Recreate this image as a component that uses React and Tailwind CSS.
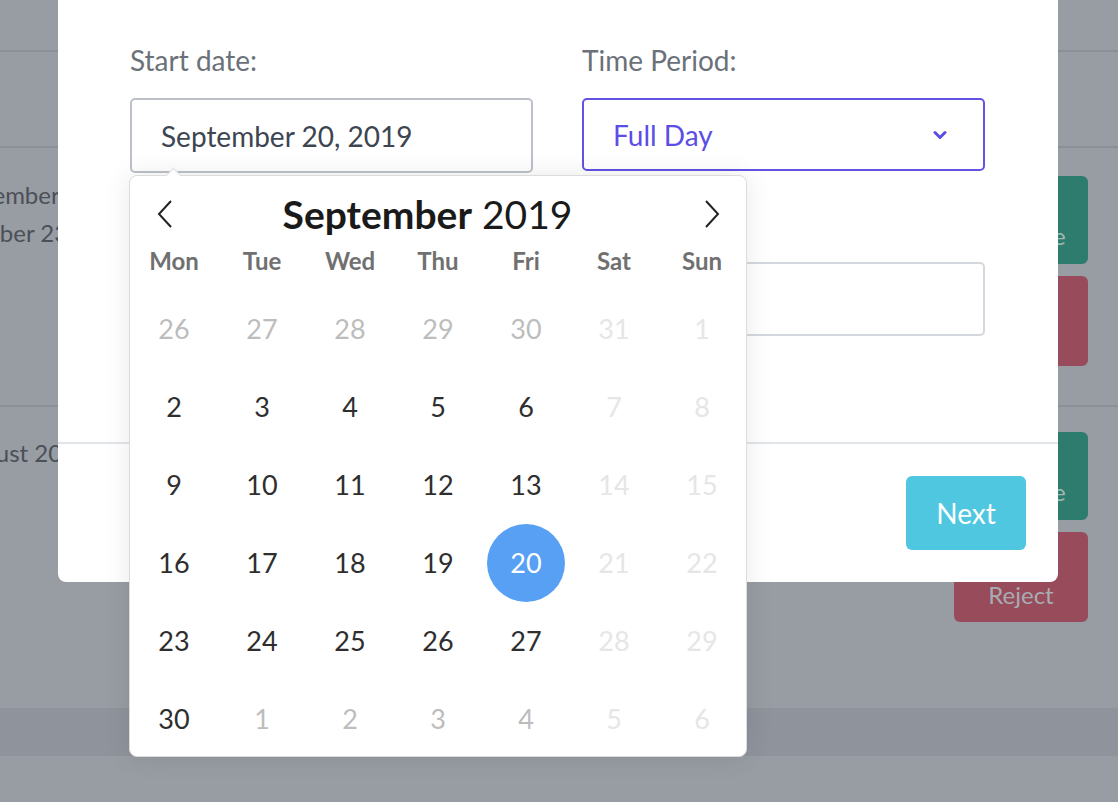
import React from "react";

const weeks = [
  [["26","o"],["27","o"],["28","o"],["29","o"],["30","o"],["31","w"],["1","w"]],
  [["2","c"],["3","c"],["4","c"],["5","c"],["6","c"],["7","w"],["8","w"]],
  [["9","c"],["10","c"],["11","c"],["12","c"],["13","c"],["14","w"],["15","w"]],
  [["16","c"],["17","c"],["18","c"],["19","c"],["20","s"],["21","w"],["22","w"]],
  [["23","c"],["24","c"],["25","c"],["26","c"],["27","c"],["28","w"],["29","w"]],
  [["30","c"],["1","o"],["2","o"],["3","o"],["4","o"],["5","w"],["6","w"]],
];

const dayNames = ["Mon", "Tue", "Wed", "Thu", "Fri", "Sat", "Sun"];

function DayCell({ label, kind }) {
  if (kind === "s") {
    return (
      <div className="flex items-center justify-center h-[78px]">
        <div className="w-[78px] h-[78px] rounded-full bg-[#58a0f4] flex items-center justify-center text-white text-[27px]">
          {label}
        </div>
      </div>
    );
  }
  const color =
    kind === "c" ? "text-[#2e2e2e]" : kind === "o" ? "text-[#bdbdbd]" : "text-[#e6e6e6]";
  return (
    <div className={`flex items-center justify-center h-[78px] text-[27px] ${color}`}>{label}</div>
  );
}

export default function App() {
  return (
    <div className="relative w-[1118px] h-[802px] overflow-hidden bg-[#989ca3] font-['Lato',sans-serif]">
      {/* background page */}
      <div className="flex flex-col">
        <div className="h-[50px]" />
        <div className="h-[2px] bg-[#8b8f96]" />
        <div className="h-[94px]" />
        <div className="h-[2px] bg-[#8b8f96]" />
        <div className="h-[257px] flex justify-between">
          <div className="flex flex-col pt-[28px] text-[24px] leading-[38px] text-[#4b5058] whitespace-nowrap">
            <div className="-ml-[55px]">September 20, 2019</div>
            <div className="-ml-[80px]">September 23, 2019</div>
          </div>
          <div className="flex flex-col gap-[12px] pt-[28px] pr-[30px]">
            <div className="w-[134px] h-[88px] rounded-md bg-[#2e7c6d] flex items-end justify-center pb-[10px] text-[24px] text-[#a3b8b2]">
              Approve
            </div>
            <div className="w-[134px] h-[90px] rounded-md bg-[#974b5b] flex items-end justify-center pb-[12px] text-[24px] text-[#a8acb2]">
              Reject
            </div>
          </div>
        </div>
        <div className="h-[2px] bg-[#8b8f96]" />
        <div className="h-[301px] flex justify-between">
          <div className="pt-[27px] text-[24px] leading-[38px] text-[#4b5058] whitespace-nowrap">
            <div className="-ml-[46px]">August 20, 2019</div>
          </div>
          <div className="flex flex-col gap-[12px] pt-[25px] pr-[30px]">
            <div className="w-[134px] h-[88px] rounded-md bg-[#2e7c6d] flex items-end justify-center pb-[10px] text-[24px] text-[#a3b8b2]">
              Approve
            </div>
            <div className="w-[134px] h-[90px] rounded-md bg-[#974b5b] flex items-end justify-center pb-[9px] text-[24px] text-[#a8acb2]">
              Reject
            </div>
          </div>
        </div>
        <div className="h-[48px] bg-[#8f939b]" />
      </div>

      {/* modal */}
      <div className="absolute left-[58px] top-0 w-[1000px] h-[582px] bg-white rounded-b-lg flex flex-col">
        <div className="h-[442px] px-[72px] pt-[44px] flex gap-[49px]">
          <div className="w-[403px] flex flex-col">
            <div className="text-[28px] leading-[32px] text-[#6b7178]">Start date:</div>
            <div className="mt-[22px] h-[75px] border-2 border-[#bcc1c9] rounded-[5px] flex items-center pl-[29px] text-[28px] text-[#3d4551]">
              September 20, 2019
            </div>
          </div>
          <div className="w-[403px] flex flex-col">
            <div className="text-[28px] leading-[32px] text-[#6b7178]">Time Period:</div>
            <div className="mt-[22px] h-[73px] border-2 border-[#6253e2] rounded-[5px] flex items-center justify-between pl-[29px] pr-[36px] text-[28px] text-[#5b4ee6]">
              <span>Full Day</span>
              <svg width="14" height="10" viewBox="0 0 14 10" fill="none">
                <path d="M2 2.5 L7 7.5 L12 2.5" stroke="#5b4ee6" strokeWidth="3" strokeLinecap="round" strokeLinejoin="round" />
              </svg>
            </div>
            <div className="mt-[91px] h-[74px] border-2 border-[#d4d8de] rounded-[5px]" />
          </div>
        </div>
        <div className="h-[2px] bg-[#e1e4e8]" />
        <div className="flex justify-end pt-[32px] pr-[32px]">
          <div className="w-[120px] h-[74px] rounded-md bg-[#4fc7e1] flex items-center justify-center text-white text-[28px]">
            Next
          </div>
        </div>
      </div>

      {/* datepicker popup */}
      <div className="absolute left-[129px] top-[175px] w-[618px] h-[582px] bg-white border border-[#dcdcdc] rounded-lg shadow-[0_0_28px_rgba(0,0,0,0.09)]">
        <div className="absolute -top-[6px] left-[38px] w-[11px] h-[11px] rotate-45 bg-white border-l border-t border-[#dcdcdc]" />
        <div className="flex items-center justify-between h-[70px] pl-[27px] pr-[26px] pt-[6px]">
          <svg width="16" height="28" viewBox="0 0 16 28" fill="none">
            <path d="M14 1 L2 14 L14 27" stroke="#222" strokeWidth="2" />
          </svg>
          <div className="text-[39px] leading-[44px] text-[#1a1a1a] pr-[22px]">
            <span className="font-bold">September</span> 2019
          </div>
          <svg width="16" height="28" viewBox="0 0 16 28" fill="none">
            <path d="M2 1 L14 14 L2 27" stroke="#222" strokeWidth="2" />
          </svg>
        </div>
        <div className="grid grid-cols-7 w-[616px] h-[30px] items-center">
          {dayNames.map((d) => (
            <div key={d} className="text-center text-[24px] leading-[30px] font-bold text-[#707070]">
              {d}
            </div>
          ))}
        </div>
        <div className="h-[14px]" />
        <div className="grid grid-cols-7 w-[616px]">
          {weeks.flat().map(([label, kind], i) => (
            <DayCell key={i} label={label} kind={kind} />
          ))}
        </div>
      </div>
    </div>
  );
}
